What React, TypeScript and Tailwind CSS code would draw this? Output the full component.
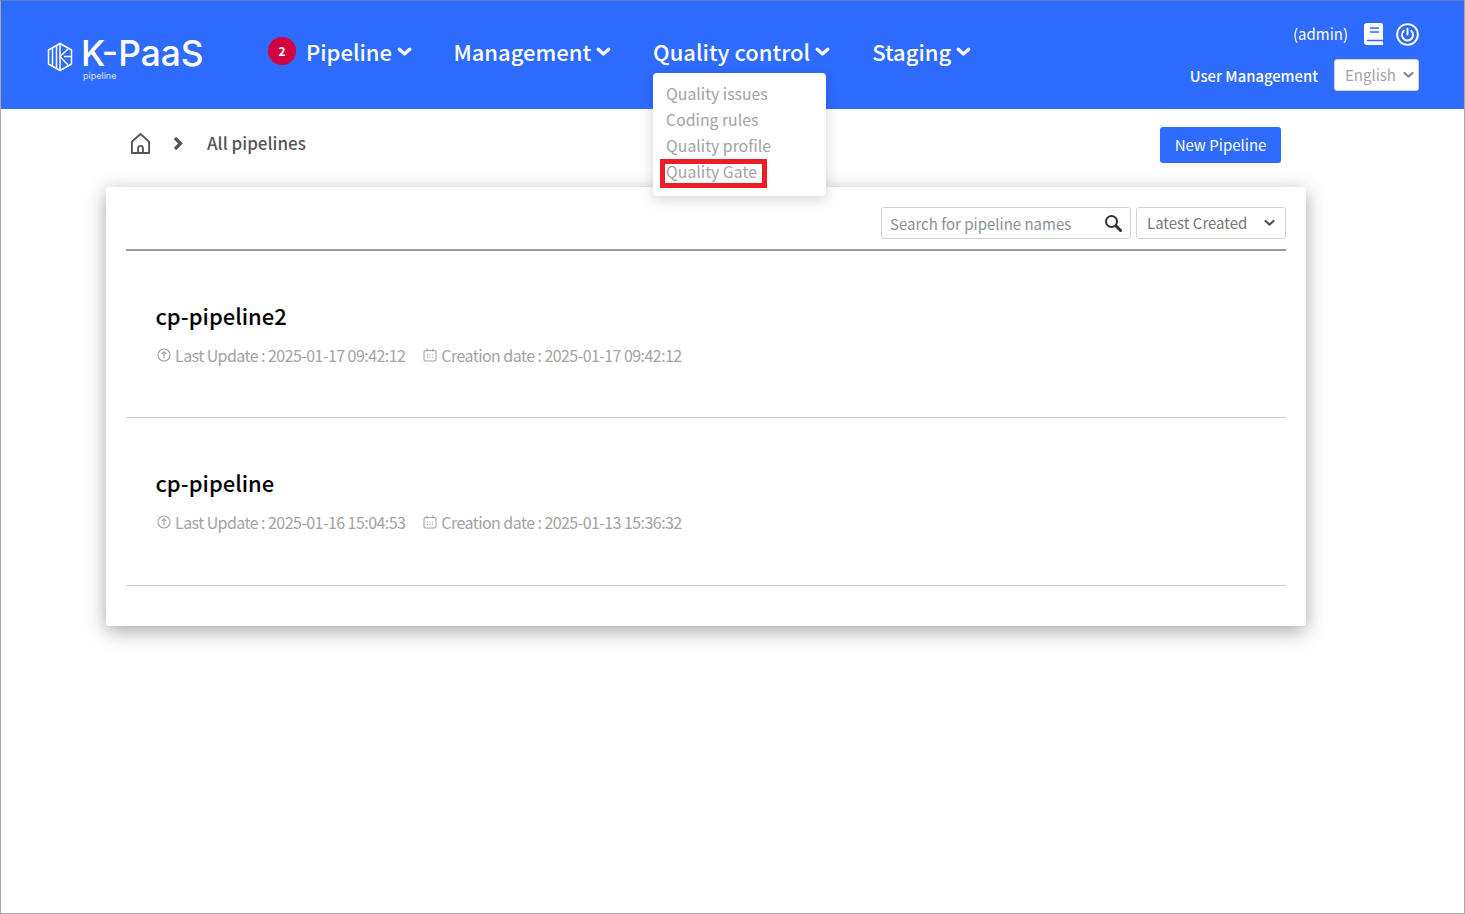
const font = { fontFamily: '"Noto Sans CJK KR", "Noto Sans", sans-serif' };

function Caret() {
  return (
    <svg width="15" height="15" viewBox="0 0 15 15" fill="none" stroke="currentColor" strokeWidth="3.2" strokeLinecap="round" strokeLinejoin="round" className="ml-[5px]">
      <path d="M2.2 5.2l5.3 4.8 5.3-4.8" />
    </svg>
  );
}

function SmallCaret({ className }: { className: string }) {
  return (
    <svg width="11" height="8" viewBox="0 0 11 8" fill="none" stroke="currentColor" strokeWidth="2.2" strokeLinecap="round" strokeLinejoin="round" className={className}>
      <path d="M1.5 2l4 3.6 4-3.6" />
    </svg>
  );
}

function Logo() {
  return (
    <svg width="26" height="30" viewBox="0 0 26 30" fill="none" stroke="white" strokeWidth="1.5" strokeLinejoin="round">
      <path d="M13 1.5l11.5 6.5v14L13 28.5 1.5 22V8z" />
      <path d="M5.5 5.8v18.4M9.5 3.5v23M13 1.5v27" />
      <path d="M13 14.5L21 7M13 14.5L21 23M17 14.5h7.5" />
    </svg>
  );
}

function NavItem({ label, open }: { label: string; open?: boolean }) {
  return (
    <div className="relative flex items-center text-[22px] leading-[32px] font-medium text-white">
      {label}
      <Caret />
      {open && (
        <div className="absolute left-0 top-[38px] z-10 h-[123px] w-[173px] rounded-[4px] bg-white pl-[13px] pt-[8px] text-[15.8px] font-normal leading-[26px] text-[#a3a3a3] shadow-[0_4px_14px_rgba(0,0,0,0.16)]">
          <div>Quality issues</div>
          <div>Coding rules</div>
          <div>Quality profile</div>
          <div className="relative">
            Quality Gate
            <span className="absolute left-[-6px] top-0 h-[29px] w-[107px] border-[5px] border-[#ee1c25]" />
          </div>
        </div>
      )}
    </div>
  );
}

function PipelineRow({ name, updated, created, height }: { name: string; updated: string; created: string; height: string }) {
  return (
    <div className={`${height} border-b border-[#cfcfcf] pl-[30px] pt-[46px]`}>
      <div className="-ml-[0.5px] text-[22px] font-medium leading-[36px] text-black">{name}</div>
      <div className="mt-[9px] flex items-center text-[16px] leading-[26px] tracking-[-0.56px] text-[#a3a3a3]">
        <svg width="14" height="14" viewBox="0 0 14 14" fill="none" stroke="#a3a3a3" strokeWidth="1.1" className="ml-px mr-[4px]">
          <circle cx="7" cy="7" r="6" />
          <path d="M7 10.5V4M4.8 6L7 3.8 9.2 6" />
        </svg>
        <span>Last Update : {updated}</span>
        <svg width="14" height="14" viewBox="0 0 14 14" fill="none" stroke="#a3a3a3" strokeWidth="1.1" className="ml-[18px] mr-[4px]">
          <rect x="1" y="2.5" width="12" height="10.5" rx="1.5" />
          <path d="M4 .5v3M10 .5v3M4 7h1M6.5 7h1M9 7h1M4 9.5h1M6.5 9.5h1M9 9.5h1" />
        </svg>
        <span>Creation date : {created}</span>
      </div>
    </div>
  );
}

export default function App() {
  return (
    <div style={font} className="flex h-[914px] flex-col overflow-hidden border border-[#a9a9a9] border-t-[#5d7cc0] bg-white">
      {/* header */}
      <header className="flex h-[108px] shrink-0 bg-[#2e6bff] pl-[46px] pr-[45px]">
        <div className="mt-[37px] flex h-[48px] w-[157px] items-start">
          <div className="mt-[4px]">
            <Logo />
          </div>
          <div className="ml-[8px] text-white">
            <div className="text-[35.3px] font-medium leading-[32px]" style={{ fontFamily: '"Inter", sans-serif' }}>K-PaaS</div>
            <div className="ml-[2px] mt-px text-[9px] leading-[10px] text-white/80" style={{ fontFamily: '"Inter", sans-serif' }}>pipeline</div>
          </div>
        </div>
        <nav className="ml-[64px] mt-[34px] flex h-[32px] items-center">
          <span className="mr-[10px] flex h-[28px] w-[28px] items-center justify-center rounded-full bg-[#d2003f] text-[12px] font-bold text-white">2</span>
          <NavItem label="Pipeline" />
          <div className="w-[41.4px]" />
          <NavItem label="Management" />
          <div className="w-[42px]" />
          <NavItem label="Quality control" open />
          <div className="w-[42px]" />
          <NavItem label="Staging" />
        </nav>
        <div className="ml-auto flex flex-col items-end pt-[19px]">
          <div className="flex h-[28px] items-center">
            <span className="text-[15px] leading-[24px] text-white">(admin)</span>
            <svg width="19" height="22" viewBox="0 0 19 22" className="ml-[16px]">
              <path fill="white" d="M3 0h14a2 2 0 0 1 2 2v20H3a3 3 0 0 1-3-3V3a3 3 0 0 1 3-3z" />
              <path stroke="#2e6bff" strokeWidth="1.5" d="M6 5h9M6 9h9M3 17.5h16" />
            </svg>
            <svg width="23" height="23" viewBox="0 0 24 24" fill="none" stroke="white" strokeWidth="2" strokeLinecap="round" className="ml-[13px]">
              <circle cx="12" cy="12" r="10.8" />
              <path d="M12 6v6M8 8.2a5.8 5.8 0 1 0 8 0" />
            </svg>
          </div>
          <div className="mt-[11px] flex items-center">
            <span className="mt-[2px] text-[14.8px] font-medium leading-[24px] text-white">User Management</span>
            <div className="ml-[16px] flex h-[32px] w-[85px] items-center justify-between rounded-[3px] border border-[#ced4da] bg-white pl-[10px] pr-[4px] text-[15px] text-[#a3a3a3]">
              English
              <SmallCaret className="text-[#888]" />
            </div>
          </div>
        </div>
      </header>

      {/* breadcrumb */}
      <div className="flex h-[78px] shrink-0 items-start pl-[129px] pr-[183px]">
        <div className="mt-[21px] flex h-[26px] items-center text-[#555]">
          <svg width="21" height="23" viewBox="0 0 22 23" fill="none" stroke="#555" strokeWidth="2" strokeLinejoin="round">
            <path d="M2 9.5L11 1.5l9 8V21.5H2z" />
            <path d="M8.5 21.5v-5a2.5 2.5 0 0 1 5 0v5" />
          </svg>
          <svg width="11" height="15" viewBox="0 0 11 15" fill="none" stroke="#555" strokeWidth="3.2" className="ml-[22px]">
            <path d="M2 2l5.5 5.5L2 13" />
          </svg>
          <span className="ml-[23px] text-[17px] font-medium leading-[26px]">All pipelines</span>
        </div>
        <button className="ml-auto mt-[18px] h-[36px] w-[121px] rounded-[3px] bg-[#2e6bff] text-[15px] leading-[24px] text-white">New Pipeline</button>
      </div>

      {/* list */}
      <main className="ml-[105px] h-[439px] w-[1200px] rounded-[3px] bg-white px-[20px] pt-[20px] shadow-[0_5px_20px_rgba(0,0,0,0.35)]">
        <div className="flex h-[44px] justify-end gap-[5px] border-b-2 border-[#999]">
          <div className="flex h-[32px] w-[250px] items-center justify-between rounded-[3px] border border-[#ced4da] pl-[8px] pr-[8px] text-[15px] text-[#8b8f94]">
            <span className="mt-[2px]">Search for pipeline names</span>
            <svg width="18" height="18" viewBox="0 0 18 18" fill="none" stroke="#333" strokeWidth="2" strokeLinecap="round">
              <circle cx="7.5" cy="7.5" r="5.5" />
              <path d="M12 12l4.5 4.5" strokeWidth="3" />
            </svg>
          </div>
          <div className="flex h-[32px] w-[150px] items-center justify-between rounded-[3px] border border-[#ced4da] pl-[10px] pr-[10px] text-[15px] text-[#777]">
            <span>Latest Created</span>
            <SmallCaret className="text-[#555]" />
          </div>
        </div>
        <PipelineRow name="cp-pipeline2" height="h-[167px]" updated="2025-01-17 09:42:12" created="2025-01-17 09:42:12" />
        <PipelineRow name="cp-pipeline" height="h-[168px]" updated="2025-01-16 15:04:53" created="2025-01-13 15:36:32" />
      </main>
    </div>
  );
}
